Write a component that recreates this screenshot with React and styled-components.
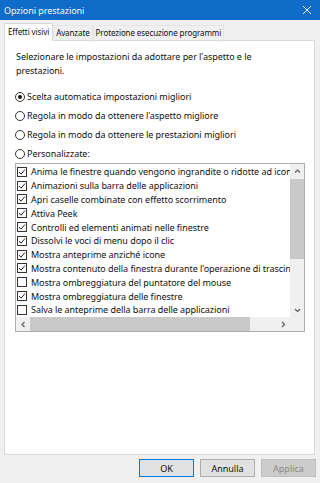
import React from 'react'
import styled, { createGlobalStyle } from 'styled-components'

const Global = createGlobalStyle`
  html, body { margin: 0; padding: 0; }
  body {
    background: #f0f0f0;
    font-family: "Noto Sans", "Open Sans", sans-serif;
  }
`

const Window = styled.div`
  width: 320px;
  height: 483px;
  display: flex;
  flex-direction: column;
  background: #f0f0f0;
  overflow: hidden;
  font-size: 9px;
  letter-spacing: -0.05px;
  color: #111;
`

const TitleBar = styled.div`
  height: 20px;
  flex: none;
  background: #0f6cc8;
  color: #f4f8fc;
  display: flex;
  align-items: center;
  justify-content: space-between;
  padding: 0 8px 0 4px;
  font-size: 9px;
`

const TabStrip = styled.div`
  height: 20px;
  flex: none;
  display: flex;
  align-items: flex-end;
  padding-left: 4px;
  position: relative;
  z-index: 1;
`

const Tab = styled.div`
  height: ${p => (p.$active ? 16 : 14)}px;
  line-height: ${p => (p.$active ? 16 : 14)}px;
  padding: 0 ${p => (p.$active ? 3 : 2)}px;
  font-size: 8px;
  letter-spacing: -0.1px;
  background: ${p => (p.$active ? '#fff' : '#f0f0f0')};
  border: 1px solid ${p => (p.$active ? '#d9d9d9' : '#e6e6e6')};
  border-bottom: ${p => (p.$active ? '1px solid #fff' : '1px solid #d9d9d9')};
  margin-bottom: -1px;
  white-space: nowrap;
`

const Panel = styled.div`
  height: 415px;
  flex: none;
  margin: 0 5px 0 4px;
  box-sizing: border-box;
  background: #fff;
  border: 1px solid #d9d9d9;
  padding: 9px 10px 0 11px;
  display: flex;
  flex-direction: column;
`

const Description = styled.p`
  margin: 0;
  line-height: 14px;
  max-width: 250px;
`

const RadioGroup = styled.div`
  margin-top: 9px;
  display: flex;
  flex-direction: column;
`

const RadioRow = styled.label`
  height: 19px;
  display: flex;
  align-items: center;
  gap: 2px;
  white-space: nowrap;
`

const RadioDot = styled.span`
  width: 10px;
  height: 10px;
  box-sizing: border-box;
  border: 1px solid #333;
  border-radius: 50%;
  display: flex;
  align-items: center;
  justify-content: center;
  margin-left: -1px;
  &::after {
    content: '';
    width: 4px;
    height: 4px;
    border-radius: 50%;
    background: ${p => (p.$checked ? '#111' : 'transparent')};
  }
`

const ListBox = styled.div`
  flex: none;
  margin-left: -1px;
  width: 290px;
  height: 169px;
  box-sizing: border-box;
  border: 1px solid #adadad;
  display: flex;
  flex-direction: column;
  overflow: hidden;
`

const ListBody = styled.div`
  flex: none;
  height: 153px;
  display: flex;
  overflow: hidden;
`

const ListItems = styled.div`
  flex: 1;
  min-width: 0;
  overflow: hidden;
  padding-top: 1px;
`

const Item = styled.div`
  height: 13.8px;
  display: flex;
  align-items: center;
  gap: 4px;
  padding-left: 1px;
  white-space: nowrap;
`

const Box = styled.span`
  flex: none;
  width: 10px;
  height: 10px;
  box-sizing: border-box;
  border: 1px solid #333;
  display: flex;
  align-items: center;
  justify-content: center;
`

const VScroll = styled.div`
  flex: none;
  width: 14px;
  height: 153px;
  background: #f0f0f0;
  display: flex;
  flex-direction: column;
`

const HScroll = styled.div`
  flex: none;
  height: 14px;
  background: #f0f0f0;
  display: flex;
  align-items: stretch;
`

const Arrow = styled.span`
  flex: none;
  width: 14px;
  height: 14px;
  display: flex;
  align-items: center;
  justify-content: center;
`

const VThumb = styled.span`
  flex: none;
  width: 14px;
  height: 80px;
  background: #c9c9c9;
  margin-top: 1px;
`

const HThumb = styled.span`
  flex: none;
  width: 220px;
  height: 14px;
  background: #c9c9c9;
`

const Spacer = styled.span`
  flex: 1;
`

const Corner = styled.span`
  flex: none;
  width: 14px;
  height: 14px;
  background: #f0f0f0;
`

const Footer = styled.div`
  flex: 1;
  display: flex;
  justify-content: flex-end;
  align-items: flex-start;
  gap: 6px;
  padding: 4px 4px 0 0;
`

const Button = styled.button`
  width: 55px;
  height: 18px;
  box-sizing: border-box;
  font: inherit;
  font-size: 9px;
  padding: 0;
  background: ${p => (p.$disabled ? '#cccccc' : '#e1e1e1')};
  color: ${p => (p.$disabled ? '#8a8a8a' : '#111')};
  border: 1px solid ${p => (p.$default ? '#0078d7' : p.$disabled ? '#bfbfbf' : '#adadad')};
  box-shadow: ${p => (p.$default ? 'inset 0 0 0 1px #d6e8f8' : 'none')};
`

const Chevron = ({ dir }) => {
  const pts = {
    up: '1,4.5 3.5,2 6,4.5',
    down: '1,2 3.5,4.5 6,2',
    left: '4.5,1 2,3.5 4.5,6',
    right: '2,1 4.5,3.5 2,6'
  }[dir]
  return (
    <svg width="7" height="7" viewBox="0 0 7 7">
      <polyline points={pts} fill="none" stroke="#606060" strokeWidth="1.2" />
    </svg>
  )
}

const Check = () => (
  <svg width="8" height="8" viewBox="0 0 8 8">
    <polyline points="1,4 3,6.2 7,1.5" fill="none" stroke="#222" strokeWidth="1" />
  </svg>
)

const items = [
  ['Anima le finestre quando vengono ingrandite o ridotte ad icona', true],
  ['Animazioni sulla barra delle applicazioni', true],
  ['Apri caselle combinate con effetto scorrimento', true],
  ['Attiva Peek', true],
  ['Controlli ed elementi animati nelle finestre', true],
  ['Dissolvi le voci di menu dopo il clic', true],
  ['Mostra anteprime anziché icone', true],
  ["Mostra contenuto della finestra durante l'operazione di trascinamento", true],
  ['Mostra ombreggiatura del puntatore del mouse', false],
  ['Mostra ombreggiatura delle finestre', true],
  ['Salva le anteprime della barra delle applicazioni', false]
]

const radios = [
  ['Scelta automatica impostazioni migliori', true],
  ["Regola in modo da ottenere l'aspetto migliore", false],
  ['Regola in modo da ottenere le prestazioni migliori', false],
  ['Personalizzate:', false]
]

export default function App() {
  return (
    <Window>
      <Global />
      <TitleBar>
        <span>Opzioni prestazioni</span>
        <svg width="10" height="10" viewBox="0 0 10 10">
          <path d="M1 1L9 9M9 1L1 9" stroke="#e8f0fa" strokeWidth="1" />
        </svg>
      </TitleBar>
      <TabStrip>
        <Tab $active>Effetti visivi</Tab>
        <Tab>Avanzate</Tab>
        <Tab>Protezione esecuzione programmi</Tab>
      </TabStrip>
      <Panel>
        <Description>
          Selezionare le impostazioni da adottare per l'aspetto e le prestazioni.
        </Description>
        <RadioGroup>
          {radios.map(([label, on]) => (
            <RadioRow key={label}>
              <RadioDot $checked={on} />
              {label}
            </RadioRow>
          ))}
        </RadioGroup>
        <ListBox>
          <ListBody>
            <ListItems>
              {items.map(([label, on]) => (
                <Item key={label}>
                  <Box>{on && <Check />}</Box>
                  {label}
                </Item>
              ))}
            </ListItems>
            <VScroll>
              <Arrow><Chevron dir="up" /></Arrow>
              <VThumb />
              <Spacer />
              <Arrow><Chevron dir="down" /></Arrow>
            </VScroll>
          </ListBody>
          <HScroll>
            <Arrow><Chevron dir="left" /></Arrow>
            <HThumb />
            <Spacer />
            <Arrow><Chevron dir="right" /></Arrow>
            <Corner />
          </HScroll>
        </ListBox>
      </Panel>
      <Footer>
        <Button $default>OK</Button>
        <Button>Annulla</Button>
        <Button $disabled>Applica</Button>
      </Footer>
    </Window>
  )
}
